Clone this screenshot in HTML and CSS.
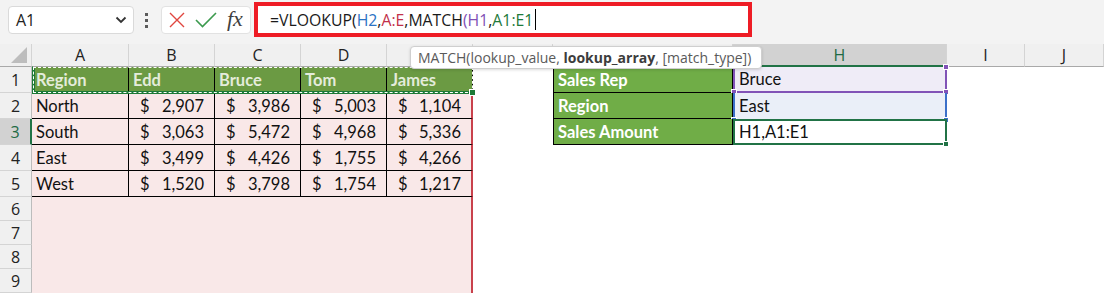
FILE: index.html
```html
<!DOCTYPE html>
<html>
<head>
<meta charset="utf-8">
<link rel="stylesheet" href="styles.css">
</head>
<body>
<div class="topbar">
  <div class="namebox"><span>A1</span>
    <svg width="12" height="8" viewBox="0 0 12 8"><path d="M1.5 1.5 L6 6 L10.5 1.5" fill="none" stroke="#333" stroke-width="1.8"/></svg>
  </div>
  <div class="dots"><span></span><span></span><span></span></div>
  <div class="fxbox">
    <svg width="16" height="16" viewBox="0 0 16 16"><path d="M1 1 L15 15 M15 1 L1 15" stroke="#e0463f" stroke-width="1.4"/></svg>
    <svg width="22" height="16" viewBox="0 0 22 16"><path d="M1 8 L7.5 14.5 L21 1" fill="none" stroke="#3c9a4e" stroke-width="1.6"/></svg>
    <span class="fx">fx</span>
  </div>
  <div class="formula"><span>=VLOOKUP(</span><span class="rb">H2</span><span>,</span><span class="rr">A:E</span><span>,MATCH</span><span class="rp">(H1</span><span>,</span><span class="rg">A1:E1</span><i class="caret"></i></div>
  <div class="rest"></div>
</div>

<div class="sheet">
  <div class="ch corner"><span class="tri"></span></div>
  <div class="ch">A</div><div class="ch">B</div><div class="ch">C</div><div class="ch">D</div><div class="ch">E</div>
  <div class="ch">F</div><div class="ch">G</div><div class="ch sel">H</div><div class="ch">I</div><div class="ch">J</div>

  <div class="rh">1</div>
  <div class="c hd">Region</div><div class="c hd">Edd</div><div class="c hd">Bruce</div><div class="c hd">Tom</div><div class="c hd">James</div>
  <div class="c"></div><div class="c lab">Sales Rep</div><div class="c h1">Bruce<i class="hdl pu tr"></i><i class="hdl pu bl"></i><i class="hdl pu br"></i></div><div class="c"></div><div class="c"></div>

  <div class="rh">2</div>
  <div class="c p t">North</div>
  <div class="c p t acc"><span>$</span><span>2,907</span></div>
  <div class="c p t acc"><span>$</span><span>3,986</span></div>
  <div class="c p t acc"><span>$</span><span>5,003</span></div>
  <div class="c p te acc"><span>$</span><span>1,104</span></div>
  <div class="c"></div><div class="c lab">Region</div><div class="c h2">East<i class="hdl bu bl"></i><i class="hdl bu br"></i></div><div class="c"></div><div class="c"></div>

  <div class="rh sel">3</div>
  <div class="c p t">South</div>
  <div class="c p t acc"><span>$</span><span>3,063</span></div>
  <div class="c p t acc"><span>$</span><span>5,472</span></div>
  <div class="c p t acc"><span>$</span><span>4,968</span></div>
  <div class="c p te acc"><span>$</span><span>5,336</span></div>
  <div class="c"></div><div class="c lab">Sales Amount</div><div class="c h3">H1,A1:E1<i class="hdl gr br"></i></div><div class="c"></div><div class="c"></div>

  <div class="rh">4</div>
  <div class="c p t">East</div>
  <div class="c p t acc"><span>$</span><span>3,499</span></div>
  <div class="c p t acc"><span>$</span><span>4,426</span></div>
  <div class="c p t acc"><span>$</span><span>1,755</span></div>
  <div class="c p te acc"><span>$</span><span>4,266</span></div>
  <div class="c"></div><div class="c"></div><div class="c"></div><div class="c"></div><div class="c"></div>

  <div class="rh">5</div>
  <div class="c p t">West</div>
  <div class="c p t acc"><span>$</span><span>1,520</span></div>
  <div class="c p t acc"><span>$</span><span>3,798</span></div>
  <div class="c p t acc"><span>$</span><span>1,754</span></div>
  <div class="c p te acc"><span>$</span><span>1,217</span></div>
  <div class="c"></div><div class="c"></div><div class="c"></div><div class="c"></div><div class="c"></div>

  <div class="rh">6</div>
  <div class="c p"></div><div class="c p"></div><div class="c p"></div><div class="c p"></div><div class="c p e"></div>
  <div class="c"></div><div class="c"></div><div class="c"></div><div class="c"></div><div class="c"></div>

  <div class="rh">7</div>
  <div class="c p"></div><div class="c p"></div><div class="c p"></div><div class="c p"></div><div class="c p e"></div>
  <div class="c"></div><div class="c"></div><div class="c"></div><div class="c"></div><div class="c"></div>

  <div class="rh">8</div>
  <div class="c p"></div><div class="c p"></div><div class="c p"></div><div class="c p"></div><div class="c p e"></div>
  <div class="c"></div><div class="c"></div><div class="c"></div><div class="c"></div><div class="c"></div>

  <div class="rh">9</div>
  <div class="c p"></div><div class="c p"></div><div class="c p"></div><div class="c p"></div><div class="c p e"></div>
  <div class="c"></div><div class="c"></div><div class="c"></div><div class="c"></div><div class="c"></div>

  <div class="ants"></div>
  <i class="ants-handle"></i>
</div>

<div class="tooltip">MATCH(lookup_value, <b>lookup_array</b>, [match_type])</div>
</body>
</html>
```

FILE: styles.css
```css
* { box-sizing: border-box; margin: 0; padding: 0; }
body {
  position: relative;
  width: 1104px;
  height: 294px;
  overflow: hidden;
  background: #fff;
  font-family: "Liberation Sans", Arial, sans-serif;
}

/* formula bar */
.topbar {
  height: 44px;
  background: #f3f3f3;
  display: flex;
  align-items: flex-start;
  padding: 2px 0 0 8px;
}
.namebox {
  margin-top: 4px;
  width: 126px;
  height: 28px;
  background: #fff;
  border: 1px solid #dadada;
  border-radius: 4px;
  display: flex;
  align-items: center;
  justify-content: space-between;
  padding: 0 6px 0 7px;
  font: 16px "Open Sans", sans-serif;
  color: #222;
}
.dots {
  margin: 11px 0 0 11px;
  display: flex;
  flex-direction: column;
  gap: 3px;
}
.dots span { width: 3px; height: 3px; background: #5a5a5a; }
.fxbox {
  margin: 4px 0 0 13px;
  width: 90px;
  height: 28px;
  background: #fff;
  border: 1px solid #e2e2e2;
  border-radius: 4px;
  display: flex;
  align-items: center;
  gap: 10px;
  padding-left: 7px;
}
.fx {
  font: italic 22px "Liberation Serif", serif;
  color: #404040;
  margin-left: 0;
  line-height: 1;
  margin-top: -2px;
}
.formula {
  margin-left: 3px;
  width: 498px;
  height: 35px;
  border: 4px solid #ee1c25;
  background: #fff;
  display: flex;
  align-items: center;
  padding-left: 12px;
  font: 15.8px "Open Sans", sans-serif;
  color: #1a1a1a;
  white-space: pre;
}
.rb { color: #2a72c4; }
.rr { color: #c2304a; }
.rp { color: #8150b5; }
.rg { color: #1e7a3a; }
.caret {
  display: inline-block;
  width: 1px;
  height: 21px;
  background: #000;
  margin-left: 2px;
}
.rest { flex: 1; }

/* sheet grid */
.sheet {
  position: relative;
  display: grid;
  grid-template-columns: 32px 97px 86px 86px 86px 86px 80px 180px 214px 78px 79px;
  grid-template-rows: 23px repeat(5, 26px) repeat(4, 24px);
  font-family: "Lato", "Liberation Sans", sans-serif;
  font-size: 16.5px;
  color: #111;
}
.ch {
  background: #f0f0f0;
  border-right: 1px solid #d4d4d4;
  border-bottom: 1px solid #a9a9a9;
  display: flex;
  align-items: center;
  justify-content: center;
  font: 16px "Open Sans", sans-serif;
  color: #222;
}
.ch.sel {
  background: #d2d2d2;
  color: #1e6b44;
  border-bottom: 2px solid #217346;
}
.corner { position: relative; }
.tri {
  position: absolute;
  right: 4px;
  bottom: 3px;
  width: 16px;
  height: 16px;
  background: #bdbdbd;
  clip-path: polygon(100% 0, 100% 100%, 0 100%);
}
.rh {
  background: #f0f0f0;
  border-bottom: 1px solid #d4d4d4;
  border-right: 1px solid #bcbcbc;
  display: flex;
  align-items: center;
  justify-content: center;
  font: 16px "Open Sans", sans-serif;
  color: #222;
}
.rh.sel {
  background: #d2d2d2;
  color: #1e6b44;
  border-right: 2px solid #217346;
}

.c {
  position: relative;
  display: flex;
  align-items: center;
  padding: 0 4px;
  white-space: nowrap;
}
.p { background: #f9e8e8; }
.t { border-right: 1px solid #000; border-bottom: 1px solid #000; }
.te { border-right: 2px solid #c9414c; border-bottom: 1px solid #000; }
.e { border-right: 2px solid #c9414c; }
.acc { justify-content: space-between; padding: 0 10px 0 11px; }

.hd {
  background: #6b9a43;
  color: #e4ecdb;
  font-weight: bold;
  border-right: 1px solid #000;
}
.lab {
  background: #70ad47;
  color: #fff;
  font-weight: bold;
  border-left: 1px solid #000;
  border-bottom: 1px solid #000;
  border-right: 1px solid #000;
}
.h1 {
  background: #efecf7;
  border-left: 2px solid #8153b7;
  border-right: 2px solid #8153b7;
  border-bottom: 2px solid #8153b7;
}
.h2 {
  background: #eaeff8;
  border-left: 2px solid #3b70c9;
  border-right: 2px solid #3b70c9;
}
.h3 {
  background: #fff;
  border: 2px solid #217346;
}
.hdl {
  position: absolute;
  width: 6px;
  height: 6px;
  border: 1px solid #fff;
}
.hdl.pu { background: #8153b7; }
.hdl.bu { background: #3b70c9; }
.hdl.gr { background: #217346; }
.hdl.tr { top: -3px; right: -4px; }
.hdl.bl { bottom: -4px; left: -4px; }
.hdl.br { bottom: -4px; right: -4px; }

/* copy marquee around A1:E1 */
.ants {
  position: absolute;
  left: 32px;
  top: 22px;
  width: 442px;
  height: 28px;
  border: 3px solid #1d7a37;
  border-top-color: transparent;
  border-right-color: transparent;
}
.ants::after {
  content: "";
  position: absolute;
  inset: -2px;
  border: 1px dashed #fff;
}
.ants-handle {
  position: absolute;
  left: 469px;
  top: 45px;
  width: 7px;
  height: 7px;
  background: #1d7a37;
  border: 1px solid #fff;
}

/* function tooltip */
.tooltip {
  position: absolute;
  left: 410px;
  top: 46px;
  width: 352px;
  height: 23px;
  background: #fff;
  border: 1px solid #cfcfcf;
  border-radius: 4px;
  box-shadow: 0 1px 3px rgba(0,0,0,0.15);
  padding-left: 7px;
  font: 14px "Open Sans", sans-serif;
  line-height: 21px;
  color: #5a5a5a;
  white-space: nowrap;
}
.tooltip b { color: #3c3c3c; }
```
